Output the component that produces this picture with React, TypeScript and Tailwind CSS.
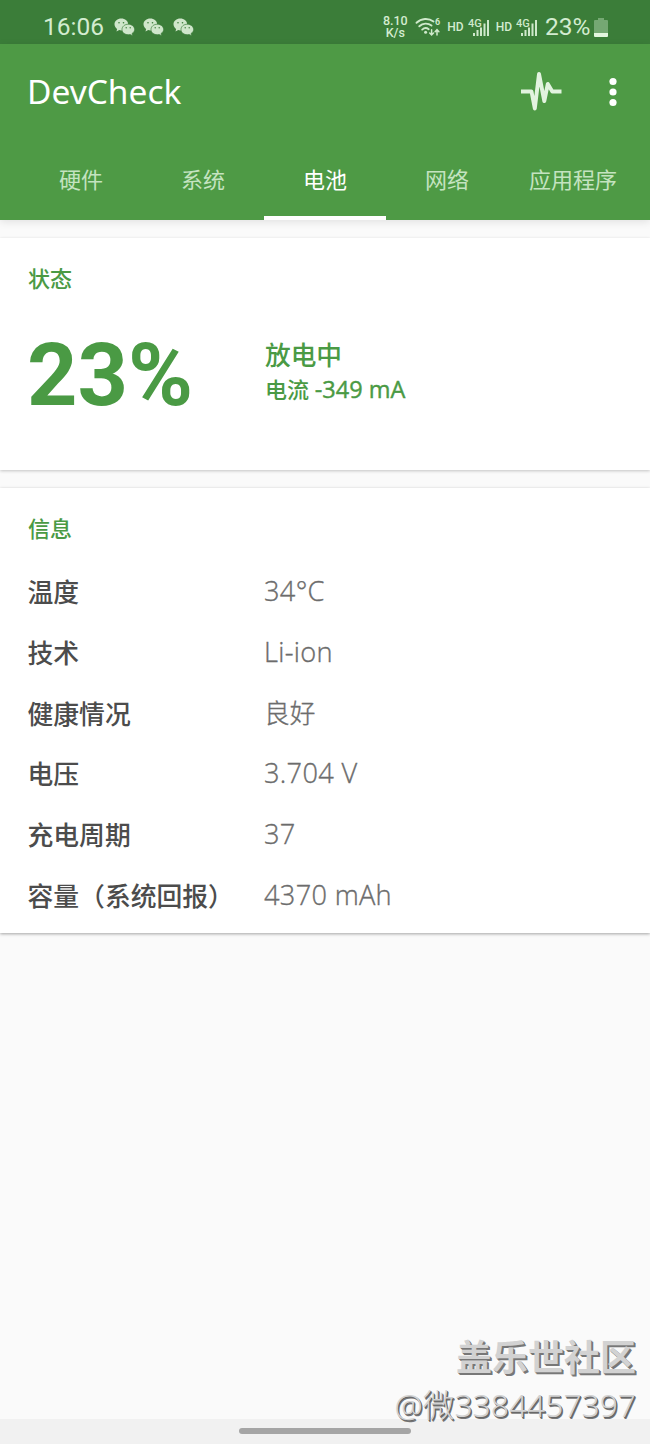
import { clsx } from "clsx";

const tabs = [
  { label: "硬件", width: "w-[122px]" },
  { label: "系统", width: "w-[122px]" },
  { label: "电池", width: "w-[122px]" },
  { label: "网络", width: "w-[122px]" },
  { label: "应用程序", width: "w-[130px]" },
];

const info = [
  { label: "温度", value: "34°C" },
  { label: "技术", value: "Li-ion" },
  { label: "健康情况", value: "良好", cjk: true },
  { label: "电压", value: "3.704 V" },
  { label: "充电周期", value: "37" },
  { label: "容量（系统回报）", value: "4370 mAh" },
];

function WeChatIcon() {
  return (
    <svg width="21" height="18" viewBox="0 0 21 18" className="shrink-0">
      <path fill="#cfe6cb" d="M7.3.5C3.5.5.5 3 .5 6.300c0 1.900 1 3.500 2.600 4.600L2.500 13.600l2.700-1.500c.7.200 1.400.3 2.200.3 3.700 0 6.800-2.600 6.800-6S11.100.5 7.300.5Z" />
      <path fill="#cfe6cb" stroke="#3b7d39" strokeWidth="0.700" d="M14.200 6.200c-3.400 0-6.200 2.300-6.200 5.300s2.800 5.200 6.200 5.200c.7 0 1.300-.1 1.900-.2l2.500 1.200-.5-2.200c1.500-1 2.500-2.400 2.500-4 0-3-2.900-5.300-6.400-5.300Z" />
      <g fill="#3b7d39">
        <circle cx="5" cy="4.800" r="0.800" />
        <circle cx="9.500" cy="4.800" r="0.800" />
        <circle cx="12.200" cy="9.800" r="0.700" />
        <circle cx="16.200" cy="9.800" r="0.700" />
      </g>
    </svg>
  );
}

function WifiIcon() {
  return (
    <svg width="26" height="20" viewBox="0 0 26 20" className="shrink-0" fill="none" stroke="#cfe9cb" strokeLinecap="round">
      <path strokeWidth="1.900" d="M1.500 5.800c4.800-4.700 12-5 17-1.300M4.300 9.300c3.500-3.300 8.600-3.500 12.200-.7M7.200 12.600c1.900-1.700 4.600-1.800 6.500-.4" />
      <circle cx="10.600" cy="15.300" r="1.500" fill="#cfe9cb" stroke="none" />
      <path strokeWidth="1.500" d="M16.600 12.700v5M14.700 16l1.900 2 1.900-2M22 18v-5M20.100 14.700l1.900-2 1.900 2" />
      <text x="20" y="8" fontSize="9" fontWeight="700" fontFamily="Roboto, sans-serif" fill="#cfe9cb" stroke="none">6</text>
    </svg>
  );
}

function SignalIcon() {
  return (
    <svg width="22" height="20" viewBox="0 0 22 20" className="shrink-0" fill="#cfe9cb">
      <text x="0" y="9.500" fontSize="11" fontWeight="500" fontFamily="Roboto, sans-serif">4G</text>
      <path d="M5 16h2v3H5zM8.500 13h2v6h-2zM12 10.500h2V19h-2zM15.500 6.500h2V19h-2zM19 3h2v16h-2z" />
    </svg>
  );
}

function StatusBar() {
  return (
    <div className="flex h-11 items-start justify-between bg-[#3b7d39] pt-[10px] pr-[42px] pl-[43px] font-[Roboto,sans-serif] text-[#d3ecd0]">
      <div className="flex h-[34px] items-center">
        <span className="w-[70.500px] text-[24.500px] leading-[34px]">16:06</span>
        <div className="flex gap-[8.500px]">
          <WeChatIcon />
          <WeChatIcon />
          <WeChatIcon />
        </div>
      </div>
      <div className="flex h-[34px] items-center">
        <div className="mr-[7px] w-[26px] text-center text-[12.500px] leading-[12.500px] font-medium">
          <div>8.10</div>
          <div>K/s</div>
        </div>
        <WifiIcon />
        <span className="mr-[4px] ml-[6px] text-[12px] font-medium">HD</span>
        <SignalIcon />
        <span className="mr-[4px] ml-[6px] text-[12px] font-medium">HD</span>
        <SignalIcon />
        <span className="ml-[7px] w-[49px] text-[24.500px] leading-[34px]">23%</span>
        <svg width="14" height="19" viewBox="0 0 14 19" className="shrink-0">
          <path fill="#75a873" d="M4 0h6v2h3q1 0 1 1v12H0V3q0-1 1-1h3z" />
          <path fill="#e3f6df" d="M0 15h14v3q0 1-1 1H1q-1 0-1-1z" />
        </svg>
      </div>
    </div>
  );
}

function AppBar() {
  return (
    <header className="relative z-10 h-44 bg-[#4e9a45] shadow-[0_2px_8px_rgba(0,0,0,0.1)]">
      <div className="flex h-[95px] items-center justify-between pr-[33px] pl-[27px]">
        <h1 className="text-[33.500px] text-white">DevCheck</h1>
        <div className="flex items-center gap-[47px]">
          <svg width="42" height="42" viewBox="0 0 42 42" fill="none" stroke="#e2f3df" strokeWidth="3.900" strokeLinejoin="round">
            <path d="M1 20.500h10.500l3.300 17L19 3l5.300 27L27.800 13l4.500 7.500H41.500" />
          </svg>
          <svg width="8" height="30" viewBox="0 0 8 30" fill="#fff">
            <circle cx="4" cy="4.500" r="3.600" />
            <circle cx="4" cy="15" r="3.600" />
            <circle cx="4" cy="25.500" r="3.600" />
          </svg>
        </div>
      </div>
      <nav className="flex h-[81px] pl-5">
        {tabs.map((tab) => (
          <div
            key={tab.label}
            className={clsx(
              "flex justify-center border-b-4 pt-6 text-[22px] leading-8",
              tab.width,
              tab.label === "电池" ? "border-white text-white" : "border-transparent text-[#c4e3c0]",
            )}
          >
            {tab.label}
          </div>
        ))}
      </nav>
    </header>
  );
}

export default function App() {
  return (
    <div className="relative flex h-[1444px] w-[650px] flex-col overflow-hidden bg-[#fafafa] font-['Noto_Sans','Noto_Sans_CJK_SC',sans-serif]">
      <StatusBar />
      <AppBar />

      <main className="flex flex-1 flex-col gap-[18px] pt-[18px]">
        <section className="h-[232px] bg-white px-7 pt-[24px] text-[#4a9a44] shadow-[0_1px_3px_rgba(0,0,0,0.22)]">
          <h2 className="text-[22px] leading-8 font-medium">状态</h2>
          <div className="mt-[30px] grid grid-cols-[237px_1fr]">
            <div className="-ml-px font-[Roboto,sans-serif] text-[88px] leading-[102px] font-bold">23%</div>
            <div className="pt-[14px] font-medium">
              <div className="text-[25.700px] leading-9">放电中</div>
              <div className="-mt-px text-[22px] leading-8">
                电流{" "}
                <span className="font-['Open_Sans',sans-serif] text-[23.500px] [-webkit-text-stroke:0.400px_#4a9a44]">
                  -349 mA
                </span>
              </div>
            </div>
          </div>
        </section>

        <section className="h-[445px] bg-white px-7 pt-[24px] shadow-[0_1px_3px_rgba(0,0,0,0.35)]">
          <h2 className="text-[22px] leading-8 font-medium text-[#4a9a44]">信息</h2>
          <dl className="mt-[17px]">
            {info.map((row) => (
              <div key={row.label} className="grid h-[60.800px] grid-cols-[236px_1fr] items-center whitespace-nowrap">
                <dt className="-ml-[0.500px] pt-[2px] text-[25.800px] font-medium text-[#4c4c4c]">{row.label}</dt>
                <dd
                  className={clsx(
                    "text-[#6c6c6c] [-webkit-text-stroke:0.350px_#6c6c6c]",
                    row.cjk
                      ? "pt-[2px] text-[25.700px] font-light"
                      : "font-['Open_Sans',sans-serif] text-[27.200px] font-light tracking-[0.300px]",
                  )}
                >
                  {row.value}
                </dd>
              </div>
            ))}
          </dl>
        </section>
      </main>

      <footer className="flex h-[25px] justify-center bg-[#f1f1f1] pt-[9px]">
        <div className="h-[6px] w-[172px] rounded-full bg-[#a5a5a5]" />
      </footer>

      {/* community watermark */}
      <div className="absolute right-[14px] bottom-[15px] text-right whitespace-nowrap text-[#d2d2d2]">
        <div className="text-[36px] leading-[47px] font-bold [text-shadow:1px_1px_0_#777,2px_2px_0_#777]">盖乐世社区</div>
        <div className="text-[31.800px] leading-[48px] font-light [text-shadow:1px_1px_0_#666,1.500px_1.500px_0_#777]">
          @微3384457397
        </div>
      </div>
    </div>
  );
}
